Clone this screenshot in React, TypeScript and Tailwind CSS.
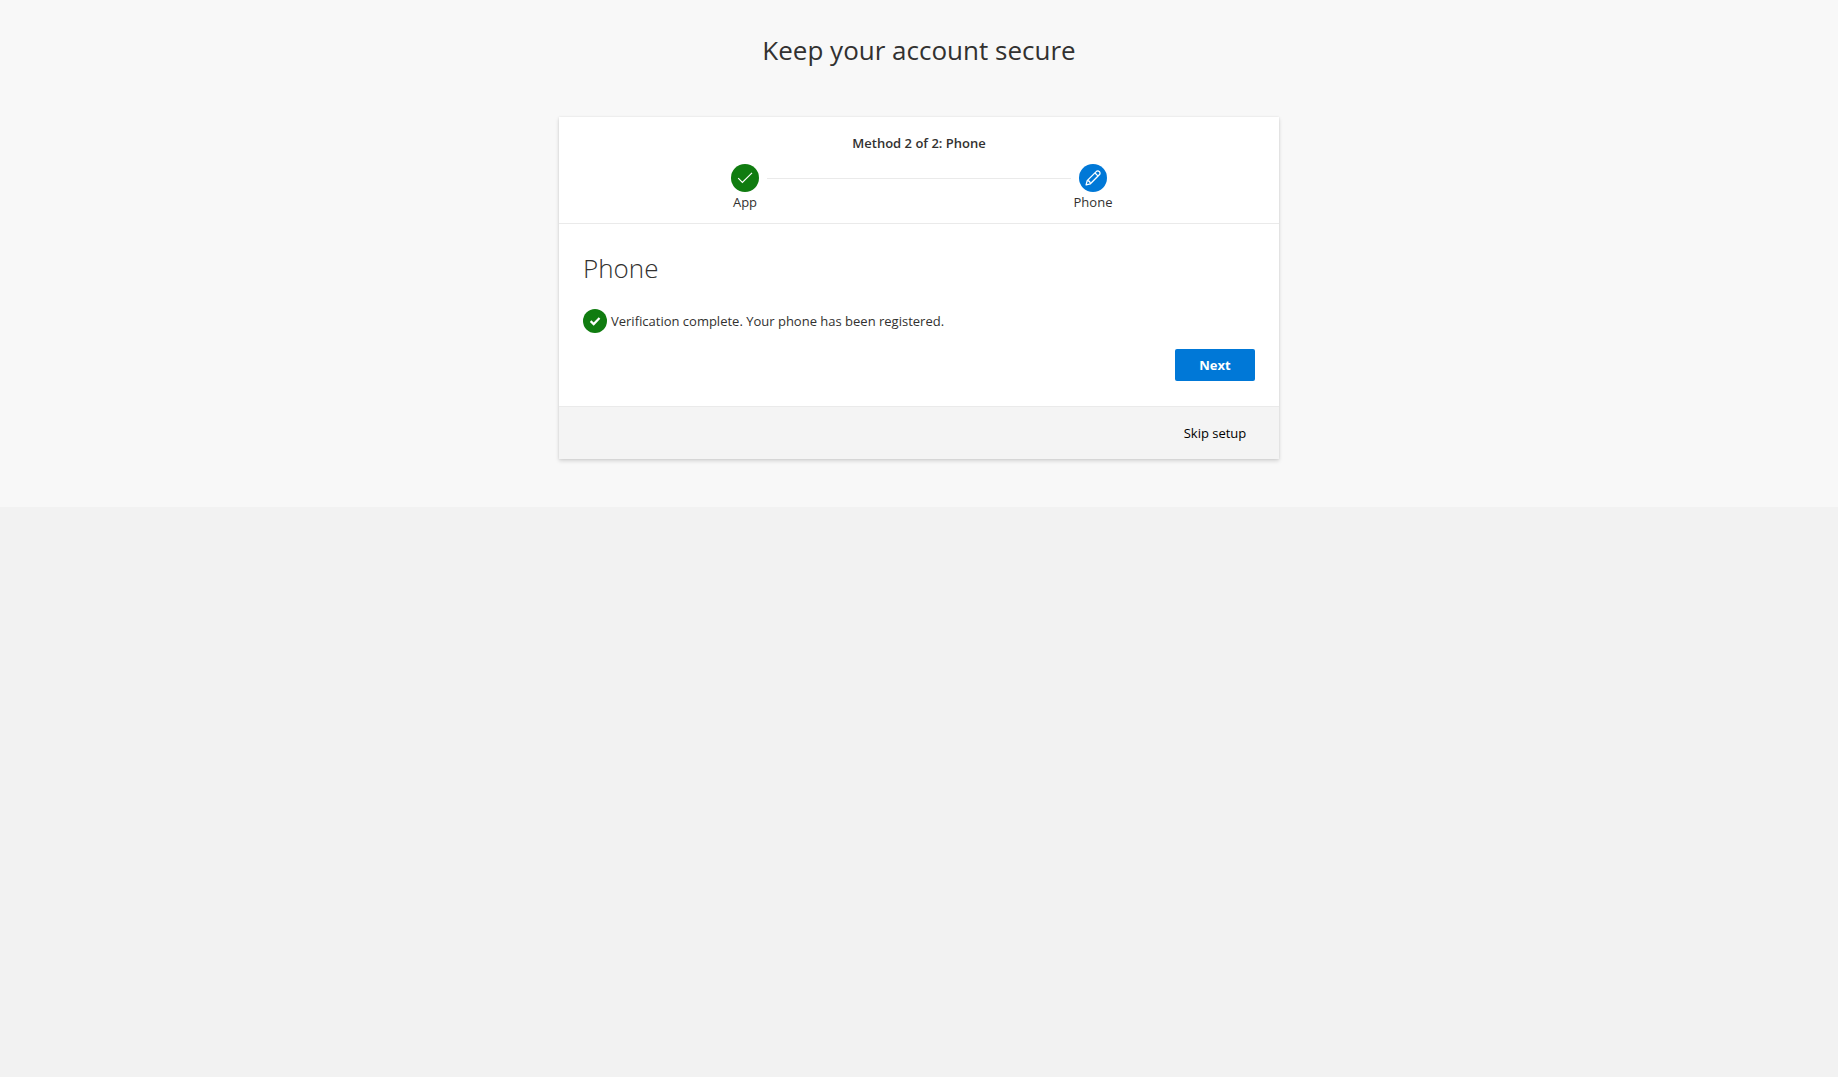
import React from "react";

function Step({ label, color, children }: { label: string; color: string; children: React.ReactNode }) {
  return (
    <li className="flex w-12 flex-col items-center">
      <span className={`flex size-7 items-center justify-center rounded-full text-white ${color}`}>{children}</span>
      <span className="text-[13px] leading-5">{label}</span>
    </li>
  );
}

function ThinCheck() {
  return (
    <svg viewBox="0 0 16 16" className="size-4" fill="none" stroke="currentColor" strokeWidth="1.2" aria-hidden="true">
      <path d="M1.2 8.2 5.4 12.4 15 2.9" />
    </svg>
  );
}

function Pencil() {
  return (
    <svg viewBox="0 0 16 16" className="size-4" fill="none" stroke="currentColor" strokeWidth="1.3" strokeLinejoin="round" aria-hidden="true">
      <path d="M1.1 14.9 2.2 10.6 11.2 1.6a2 2 0 0 1 3.1 0 2 2 0 0 1 0 3.1L5.4 13.8Z" />
      <path d="M10 3 12.9 5.9M2.4 10.6A3.4 3.4 0 0 1 5.4 13.6" />
    </svg>
  );
}

function DoneBadge() {
  return (
    <svg viewBox="0 0 24 24" className="size-6 shrink-0" aria-hidden="true">
      <circle cx="12" cy="12" r="12" fill="#107c10" />
      <path d="M7.6 12.1 10.7 15.1 16.5 9.1" fill="none" stroke="white" strokeWidth="2.2" />
    </svg>
  );
}

export default function App() {
  return (
    <div className="min-h-screen bg-[#f2f2f2] font-['Open_Sans','Noto_Sans',sans-serif] text-[13px] leading-5 text-[#323130]">
      <main className="flex flex-col items-center bg-[#f8f8f8] px-4 pt-8 pb-12">
        <h1 className="text-[26px] leading-9">Keep your account secure</h1>
        <section className="mt-[49px] w-full max-w-[720px] bg-white shadow-[0_2px_4px_rgba(0,0,0,0.15),0_0_2px_rgba(0,0,0,0.08)]">
          <header className="flex flex-col items-center border-b border-[#eaeaea] pt-4 pb-[11px]">
            <h2 className="font-semibold leading-5">Method 2 of 2: Phone</h2>
            <ol className="mt-[11px] flex w-full max-w-[396px] items-start">
              <Step label="App" color="bg-[#107c10]">
                <ThinCheck />
              </Step>
              <li aria-hidden="true" className="mx-[-2px] mt-3.5 h-px flex-1 bg-[#eaeaea]" />
              <Step label="Phone" color="bg-[#0078d7]">
                <Pencil />
              </Step>
            </ol>
          </header>
          <div className="flex flex-col px-6 pt-6 pb-[25px]">
            <h3 className="text-[26px] font-light leading-10">Phone</h3>
            <p className="mt-[21px] flex items-center gap-1" role="status">
              <DoneBadge />
              Verification complete. Your phone has been registered.
            </p>
            <button type="button" className="mt-4 h-8 w-20 self-end rounded-xs bg-[#0078d7] font-bold text-white">
              Next
            </button>
          </div>
          <footer className="flex justify-end border-t border-[#eaeaea] bg-[#f4f4f4] px-6 py-2.5">
            <button type="button" className="h-8 w-20 whitespace-nowrap text-black">
              Skip setup
            </button>
          </footer>
        </section>
      </main>
    </div>
  );
}
